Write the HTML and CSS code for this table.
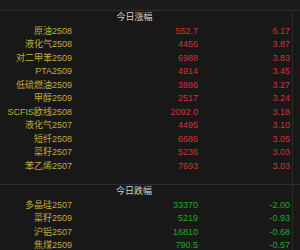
FILE: index.html
```html
<!DOCTYPE html>
<html lang="zh">
<head>
<meta charset="utf-8">
<link rel="stylesheet" href="styles.css">
</head>
<body>
<div class="topbar"></div>
<div class="board">
  <section class="sec up">
    <div class="head">今日涨幅</div>
    <div class="row"><span class="name">原油2508</span><span class="price">552.7</span><span class="chg">6.17</span></div>
    <div class="row"><span class="name">液化气2508</span><span class="price">4456</span><span class="chg">3.87</span></div>
    <div class="row"><span class="name">对二甲苯2509</span><span class="price">6988</span><span class="chg">3.83</span></div>
    <div class="row"><span class="name">PTA2509</span><span class="price">4914</span><span class="chg">3.45</span></div>
    <div class="row"><span class="name">低硫燃油2509</span><span class="price">3886</span><span class="chg">3.27</span></div>
    <div class="row"><span class="name">甲醇2509</span><span class="price">2517</span><span class="chg">3.24</span></div>
    <div class="row"><span class="name">SCFIS欧线2508</span><span class="price">2092.0</span><span class="chg">3.18</span></div>
    <div class="row"><span class="name">液化气2507</span><span class="price">4495</span><span class="chg">3.10</span></div>
    <div class="row"><span class="name">短纤2508</span><span class="price">6686</span><span class="chg">3.05</span></div>
    <div class="row"><span class="name">菜籽2507</span><span class="price">5236</span><span class="chg">3.03</span></div>
    <div class="row"><span class="name">苯乙烯2507</span><span class="price">7693</span><span class="chg">3.03</span></div>
  </section>
  <section class="sec down">
    <div class="head">今日跌幅</div>
    <div class="row"><span class="name">多晶硅2507</span><span class="price">33370</span><span class="chg">-2.00</span></div>
    <div class="row"><span class="name">菜籽2509</span><span class="price">5219</span><span class="chg">-0.93</span></div>
    <div class="row"><span class="name">沪铝2507</span><span class="price">16810</span><span class="chg">-0.68</span></div>
    <div class="row"><span class="name">焦煤2509</span><span class="price">790.5</span><span class="chg">-0.57</span></div>
  </section>
</div>
</body>
</html>
```
FILE: styles.css
```css
html, body {
  margin: 0;
  padding: 0;
  background: #181818;
  width: 300px;
  height: 250px;
  overflow: hidden;
  font-family: "Liberation Sans", "Noto Sans CJK SC", sans-serif;
  font-size: 9px;
}
.topbar {
  height: 10px;
  background: #1c1c1c;
  border-bottom: 1px solid #2e2e2e;
}
.board {
  width: 292px;
  border-right: 1px solid #2a2a2a;
  height: 239px;
}
.sec.up {
  height: 174px;
  border-bottom: 1px solid #2e2e2e;
  box-sizing: border-box;
  width: 300px;
}
.sec.up .head, .sec.up .row { width: 293px; }
.head {
  height: 13.5px;
  line-height: 13.5px;
  text-align: center;
  padding-right: 24px;
  box-sizing: border-box;
  color: #d2d2d2;
}
.row {
  display: grid;
  grid-template-columns: 72px 126px 92px;
  height: 13.5px;
  line-height: 13.5px;
  white-space: nowrap;
}
.row span { text-align: right; }
.name { color: #c2a83e; }
.up .price, .up .chg { color: #d23434; }
.down .price, .down .chg { color: #22a822; }
```
